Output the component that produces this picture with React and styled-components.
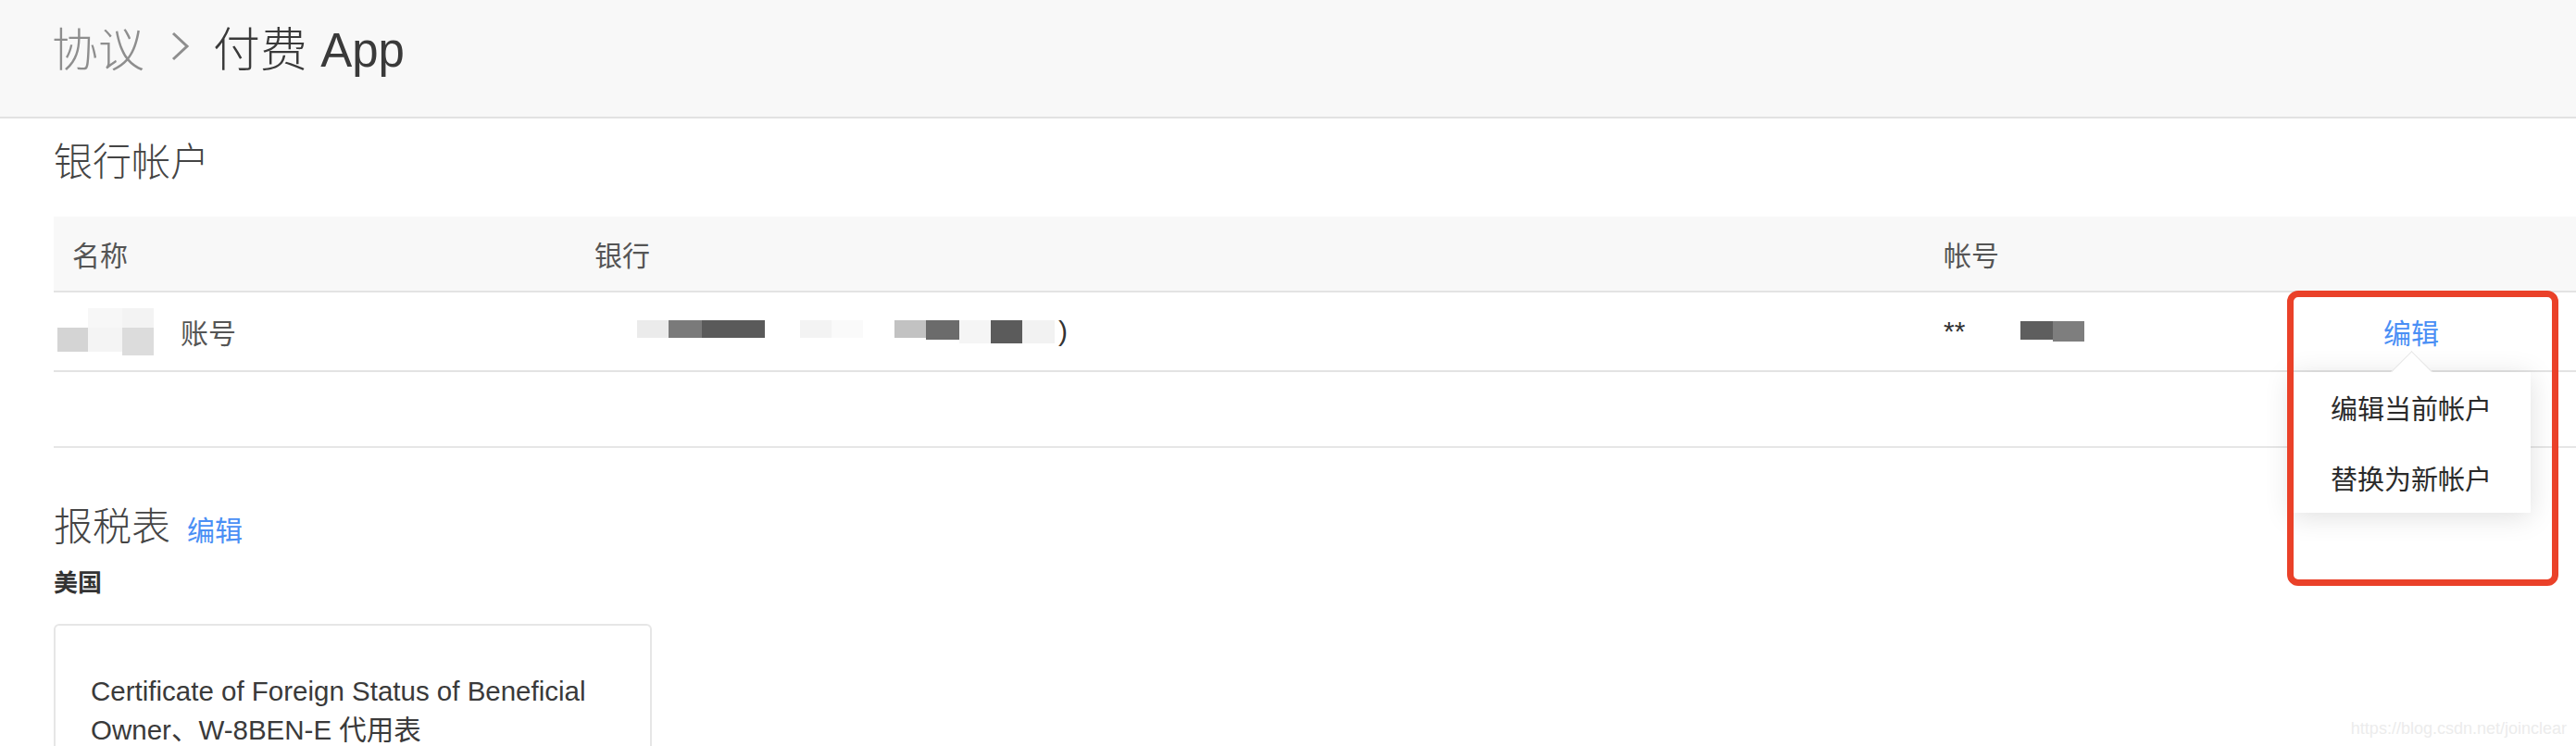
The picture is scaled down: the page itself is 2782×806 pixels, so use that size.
import React from "react";
import styled, { createGlobalStyle } from "styled-components";

// Redacted cells from the screenshot: each column is a stack of [height, colour]
const nameMosaic = [
  { w: 33, mt: 21, segs: [[26, "#d4d4d4"]] },
  { w: 37, mt: 0, segs: [[21, "#f7f7f7"], [26, "#f4f4f4"]] },
  { w: 34, mt: 0, segs: [[21, "#f3f3f3"], [30, "#dcdcdc"]] },
];

const bankMosaic = [
  { w: 34, segs: [[19, "#ebebeb"]] },
  { w: 36, segs: [[19, "#7a7a7a"]] },
  { w: 68, segs: [[19, "#5a5a5a"]] },
  { w: 38, segs: [[19, "transparent"]] },
  { w: 34, segs: [[19, "#f3f3f3"]] },
  { w: 34, segs: [[19, "#fafafa"]] },
  { w: 34, segs: [[19, "transparent"]] },
  { w: 34, segs: [[19, "#c2c2c2"]] },
  { w: 36, segs: [[21, "#6b6b6b"]] },
  { w: 34, segs: [[25, "#f5f5f5"]] },
  { w: 34, segs: [[25, "#5b5b5b"]] },
  { w: 35, segs: [[25, "#f2f2f2"]] },
];

const accountMosaic = [
  { w: 35, segs: [[20, "#5e5e5e"]] },
  { w: 34, segs: [[22, "#7e7e7e"]] },
];

const Mosaic = ({ cells, offset = 0 }) => (
  <MosaicRow $offset={offset}>
    {cells.map((cell, i) => (
      <MosaicCol key={i} $w={cell.w} $mt={cell.mt || 0}>
        {cell.segs.map(([h, c], j) => (
          <MosaicSeg key={j} $h={h} $c={c} />
        ))}
      </MosaicCol>
    ))}
  </MosaicRow>
);

const Chevron = () => (
  <svg width="22" height="34" viewBox="0 0 22 34" fill="none">
    <path d="M3 3 L18 17 L3 31" stroke="#8e8e8e" strokeWidth="3" />
  </svg>
);

const App = () => {
  return (
    <Page>
      <GlobalStyle />
      <Header>
        <Crumb>协议</Crumb>
        <Chevron />
        <Current>付费 App</Current>
      </Header>

      <Content>
        <SectionTitle>银行帐户</SectionTitle>

        <Table>
          <HeadRow>
            <Cell>名称</Cell>
            <Cell>银行</Cell>
            <Cell>帐号</Cell>
            <Cell />
          </HeadRow>
          <BodyRow>
            <Cell>
              <Mosaic cells={nameMosaic} offset={-16} />
              <NameText>账号</NameText>
            </Cell>
            <Cell>
              <Mosaic cells={bankMosaic} offset={46} />
              <Tail>)</Tail>
            </Cell>
            <Cell>
              <Stars>**</Stars>
              <Mosaic cells={accountMosaic} offset={60} />
            </Cell>
            <ActionCell>
              <LinkText>编辑</LinkText>
              <Popover>
                <MenuItem>编辑当前帐户</MenuItem>
                <MenuItem>替换为新帐户</MenuItem>
              </Popover>
              <Highlight />
            </ActionCell>
          </BodyRow>
        </Table>

        <Divider />

        <TaxTitleRow>
          <SectionTitle as="span">报税表</SectionTitle>
          <LinkText>编辑</LinkText>
        </TaxTitleRow>
        <Country>美国</Country>

        <FormCard>
          <FormName>
            Certificate of Foreign Status of Beneficial Owner、W-8BEN-E 代用表
          </FormName>
        </FormCard>
      </Content>

      <Watermark>https://blog.csdn.net/joinclear</Watermark>
    </Page>
  );
};

export default App;

const GlobalStyle = createGlobalStyle`
  html, body {
    margin: 0;
    padding: 0;
    background: #ffffff;
    overflow: hidden;
  }
  body {
    font-family: "Liberation Sans", "Noto Sans CJK SC", sans-serif;
    color: #333;
  }
`;

const Page = styled.div`
  position: relative;
  width: 2782px;
  height: 806px;
  overflow: hidden;
`;

const Header = styled.header`
  height: 128px;
  box-sizing: border-box;
  background: #f8f8f8;
  border-bottom: 2px solid #e2e2e2;
  display: flex;
  align-items: center;
  padding-left: 56px;
  padding-bottom: 26px;

  svg {
    margin: 0 24px 0 28px;
  }
`;

const Crumb = styled.span`
  font-size: 50px;
  font-weight: 300;
  color: #8e8e8e;
`;

const Current = styled.span`
  font-size: 51px;
  font-weight: 300;
  color: #3a3a3a;
`;

const Content = styled.main`
  padding-left: 58px;
`;

const SectionTitle = styled.h2`
  margin: 0;
  padding: 22px 0 0;
  height: 106px;
  box-sizing: border-box;
  font-size: 42px;
  font-weight: 300;
  color: #444;
  line-height: 52px;
`;

const Table = styled.div`
  width: 100%;
`;

const columns = "564px 1457px 347px 1fr";

const HeadRow = styled.div`
  display: grid;
  grid-template-columns: ${columns};
  height: 82px;
  background: #f8f8f8;
  border-bottom: 2px solid #e3e3e3;
  box-sizing: border-box;
  font-size: 30px;
  color: #555;
`;

const BodyRow = styled.div`
  display: grid;
  grid-template-columns: ${columns};
  height: 86px;
  border-bottom: 2px solid #e3e3e3;
  box-sizing: border-box;
  font-size: 30px;
  color: #555;
`;

const Cell = styled.div`
  display: flex;
  align-items: center;
  padding-left: 20px;
`;

const ActionCell = styled.div`
  position: relative;
  display: flex;
  align-items: center;
  justify-content: center;
`;

const MosaicRow = styled.div`
  display: flex;
  align-items: flex-start;
  margin-left: ${(p) => p.$offset}px;
`;

const MosaicCol = styled.div`
  display: flex;
  flex-direction: column;
  width: ${(p) => p.$w}px;
  margin-top: ${(p) => p.$mt}px;
`;

const MosaicSeg = styled.div`
  height: ${(p) => p.$h}px;
  background: ${(p) => p.$c};
`;

const NameText = styled.span`
  margin-left: 29px;
`;

const Tail = styled.span`
  margin-left: 4px;
  color: #333;
`;

const Stars = styled.span`
  color: #333;
`;

const LinkText = styled.span`
  font-size: 30px;
  color: #4a8ff5;
  cursor: pointer;
`;

const Popover = styled.div`
  position: absolute;
  left: 49px;
  top: 86px;
  width: 258px;
  background: #fff;
  box-shadow: 0 4px 28px rgba(0, 0, 0, 0.13);
  z-index: 2;

  &::before {
    content: "";
    position: absolute;
    left: 113px;
    top: -16px;
    width: 32px;
    height: 32px;
    background: #fff;
    border-top: 1px solid #e4e4e4;
    border-left: 1px solid #e4e4e4;
    transform: rotate(45deg);
  }
`;

const MenuItem = styled.div`
  position: relative;
  height: 76px;
  display: flex;
  align-items: center;
  justify-content: center;
  font-size: 29px;
  color: #2a2a2a;
  background: #fff;
`;

const Highlight = styled.div`
  position: absolute;
  left: 44px;
  top: -2px;
  width: 293px;
  height: 319px;
  box-sizing: border-box;
  border: 7px solid #ea4129;
  border-radius: 12px;
  z-index: 3;
  pointer-events: none;
`;

const Divider = styled.hr`
  margin: 80px 0 0;
  border: none;
  border-top: 2px solid #e6e6e6;
`;

const TaxTitleRow = styled.div`
  display: flex;
  align-items: baseline;
  gap: 18px;
  margin-top: 60px;

  & > span:first-child {
    padding: 0;
    height: auto;
  }
`;

const Country = styled.div`
  margin-top: 13px;
  font-size: 26px;
  font-weight: bold;
  color: #333;
`;

const FormCard = styled.div`
  margin-top: 28px;
  width: 646px;
  height: 200px;
  box-sizing: border-box;
  border: 2px solid #e6e6e6;
  border-radius: 6px;
  padding: 50px 38px 0;
`;

const FormName = styled.div`
  font-size: 29.5px;
  line-height: 42px;
  color: #3a3a3a;
`;

const Watermark = styled.div`
  position: absolute;
  right: 10px;
  bottom: 8px;
  font-size: 18px;
  color: #ececec;
`;
